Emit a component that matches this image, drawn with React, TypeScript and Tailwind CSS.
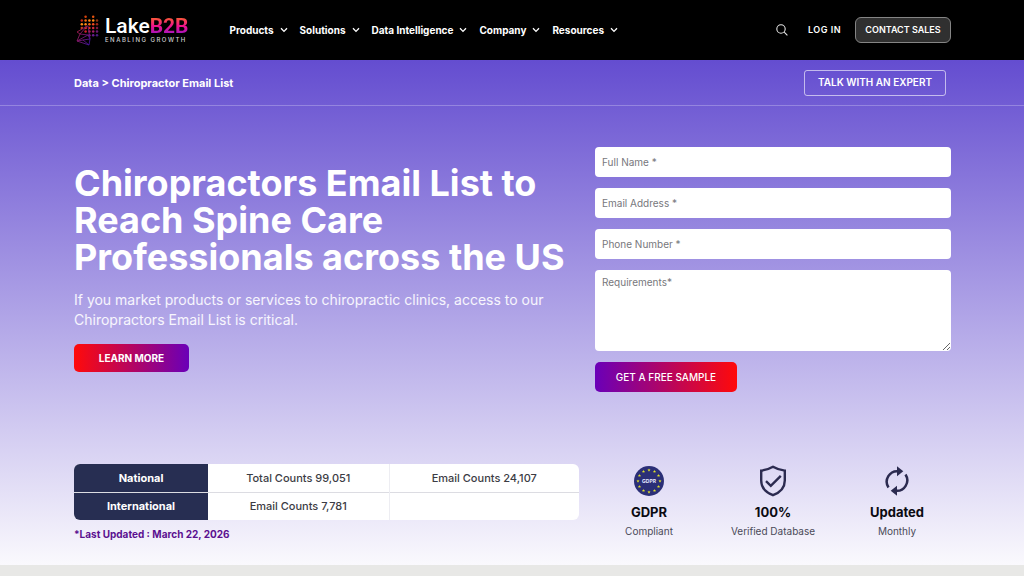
import type { ReactNode } from "react";

const navItems = ["Products", "Solutions", "Data Intelligence", "Company", "Resources"];

function Chevron() {
  return (
    <svg viewBox="0 0 8 6" className="h-[6px] w-2" fill="none" stroke="#fff" strokeWidth="1.3" aria-hidden="true">
      <path d="M1 1.2 4 4.4 7 1.2" />
    </svg>
  );
}

const dotColours = [
  ["", "", "#d8430c", "", "#e8540f", ""],
  ["", "#c9280f", "#f06a10", "#ff8a14", "#ff8a14", "#8a3510"],
  ["", "#ff8a14", "#ff8a14", "#f36a16", "#ef4a1c", "#a02818"],
  ["", "#c9401a", "#f0401e", "#e2301e", "#d22a3a", "#7a1a40"],
  ["", "", "#d0202a", "#b81c4a", "#a01c6a", "#6a1a70"],
  ["", "", "", "#8a1a70", "#6a1c90", "#4a1a80"],
];

function Logo() {
  return (
    <a href="#home" aria-label="Lake B2B" className="flex items-center gap-[6px]">
      <svg viewBox="0 0 23 31" className="h-[31px] w-[23px]" aria-hidden="true">
        <defs>
          <linearGradient id="wing" x1="0" y1="0" x2="1" y2="1">
            <stop offset="0" stopColor="#b01a3c" />
            <stop offset="1" stopColor="#3d12a0" />
          </linearGradient>
        </defs>
        {dotColours.map((row, r) =>
          row.map((c, i) => c && <circle key={`${r}-${i}`} cx={2 + i * 3.8} cy={1.8 + r * 3.7} r="1.25" fill={c} />)
        )}
        <g fill="none" stroke="url(#wing)" strokeWidth="0.9">
          <path d="M11 11 1 17l3 2-3 7 6-1 6 5 1-6-2-13Z" />
          <path d="M11 11 4 19l8 1-11 6 12 4M12 20l2 4-7 1" />
        </g>
      </svg>
      <span className="flex flex-col">
        <span className="font-[Roboto,sans-serif] text-[21px] leading-5 font-medium text-white">
          Lake
          <span className="bg-linear-to-b/srgb from-[#ff7a10] via-[#f0128c] to-[#7a16d8] bg-clip-text font-bold text-transparent">
            B2B
          </span>
        </span>
        <span className="text-[6px] leading-2 font-medium tracking-[1.5px] text-[#d0d0d0]">ENABLING GROWTH</span>
      </span>
    </a>
  );
}

function Header() {
  return (
    <header className="flex h-15 items-center bg-black pr-[73px] pl-[76px] text-white">
      <Logo />
      <nav className="ml-[41px] flex items-center gap-3">
        {navItems.map((item) => (
          <button key={item} type="button" className="flex items-center gap-[6px] text-[10px] leading-4 font-bold whitespace-nowrap">
            {item}
            <Chevron />
          </button>
        ))}
      </nav>
      <div className="ml-auto flex items-center">
        <button type="button" aria-label="Search" className="mr-5">
          <svg viewBox="0 0 12 12" className="h-3 w-3" fill="none" stroke="#e5e5e5" strokeWidth="1.1" aria-hidden="true">
            <circle cx="5" cy="5" r="4.2" />
            <path d="m8.2 8.2 3.2 3.2" />
          </svg>
        </button>
        <a href="#login" className="mr-[14px] text-[9px] leading-4 font-semibold tracking-[0.5px] whitespace-nowrap">
          LOG IN
        </a>
        <a
          href="#contact"
          className="flex h-[26px] w-24 items-center justify-center rounded-md border border-[#858585] bg-[#303030] text-[9px] font-semibold whitespace-nowrap"
        >
          CONTACT SALES
        </a>
      </div>
    </header>
  );
}

function LeadForm() {
  const field =
    "block w-full rounded-sm bg-white px-[7px] text-[10px] text-gray-800 placeholder:text-[#77777c] outline-none";
  return (
    <form className="flex flex-col items-start gap-[11px]" onSubmit={(e) => e.preventDefault()}>
      <input aria-label="Full Name" placeholder="Full Name *" className={`${field} h-[30px]`} />
      <input aria-label="Email Address" type="email" placeholder="Email Address *" className={`${field} h-[30px]`} />
      <input aria-label="Phone Number" type="tel" placeholder="Phone Number *" className={`${field} h-[30px]`} />
      <textarea aria-label="Requirements" placeholder="Requirements*" className={`${field} h-[81px] resize py-[5px] leading-[15px]`} />
      <button
        type="submit"
        className="h-[30px] w-[142px] rounded-[5px] bg-linear-to-r/srgb from-[#6a00b8] to-[#ff0a0a] text-[10px] font-medium whitespace-nowrap text-white"
      >
        GET A FREE SAMPLE
      </button>
    </form>
  );
}

function CountsTable() {
  const head = "w-[134px] bg-[#272e52] text-center font-bold text-white";
  const cell = "text-center font-medium text-[#3c3c44]";
  return (
    <div>
      <div className="overflow-hidden rounded-md bg-white">
        <table className="w-full table-fixed border-collapse text-[11px] leading-4">
          <tbody>
            <tr className="h-7 border-b border-[#dcdce2]">
              <th scope="row" className={head}>National</th>
              <td className={`${cell} w-[181px] border-r border-[#ededf2]`}>Total Counts 99,051</td>
              <td className={cell}>Email Counts 24,107</td>
            </tr>
            <tr className="h-7">
              <th scope="row" className={head}>International</th>
              <td className={`${cell} border-r border-[#ededf2]`}>Email Counts 7,781</td>
              <td className={cell} />
            </tr>
          </tbody>
        </table>
      </div>
      <p className="mt-[6px] text-[10px] leading-4 font-bold text-[#5b1090]">*Last Updated : March 22, 2026</p>
    </div>
  );
}

const stars = Array.from({ length: 12 }, (_, i) => (i * Math.PI) / 6);

function GdprIcon() {
  return (
    <svg viewBox="0 0 30 30" className="h-[30px] w-[30px]" aria-hidden="true">
      <circle cx="15" cy="15" r="15" fill="#2b2f77" />
      {stars.map((a) => (
        <path
          key={a}
          transform={`translate(${15 + 11 * Math.sin(a)} ${15 - 11 * Math.cos(a)})`}
          d="M0-1.6.45-.5 1.6-.45.7.25 1 1.4 0 .75-1 1.4-.7.25-1.6-.45-.45-.5Z"
          fill="#dfe02a"
        />
      ))}
      <text x="15" y="16.8" textAnchor="middle" fontSize="5" fontWeight="700" fill="#e6e8ff">
        GDPR
      </text>
    </svg>
  );
}

function ShieldIcon() {
  return (
    <svg viewBox="0 0 28 32" className="h-8 w-7" fill="none" stroke="#2c2b50" strokeWidth="2.4" aria-hidden="true">
      <path d="M14 1.8C10.5 3.9 6.5 5.2 2.2 5.6V15.5C2.2 22.5 7 27.5 14 30.2 21 27.5 25.8 22.5 25.8 15.5V5.6C21.5 5.2 17.5 3.9 14 1.8Z" />
      <path d="m7 16.2 4.8 4.6L21.800 10.8" />
    </svg>
  );
}

function RefreshIcon() {
  return (
    <svg viewBox="0 0 24 30" className="h-[30px] w-6" aria-hidden="true">
      <g fill="none" stroke="#2c2b50" strokeWidth="2.5">
        <path d="M3.5 21.500A10.500 10.500 0 0 1 13.500 5.300" />
        <path d="M20.500 8.500A10.500 10.500 0 0 1 10.500 24.700" />
      </g>
      <path d="M12 .3 18.3 5.3 12 10.3ZM12 19.7 5.7 24.7 12 29.7Z" fill="#2c2b50" />
    </svg>
  );
}

function Feature({ icon, title, text }: { icon: ReactNode; title: string; text: string }) {
  return (
    <div className="flex flex-col items-center pt-px">
      <div className="flex h-8 items-center">{icon}</div>
      <p className="mt-[7px] text-[13px] leading-4 font-bold text-[#0b0b12]">{title}</p>
      <p className="mt-[3px] text-[10px] leading-4 whitespace-nowrap text-[#4a4a58]">{text}</p>
    </div>
  );
}

export default function App() {
  return (
    <div className="min-h-screen bg-[#e8e8e6] font-[Inter,sans-serif]">
      <Header />
      <main className="bg-linear-to-b/srgb from-[#644dd0] to-[#faf9fd] pb-[23px]">
        <div className="flex h-[46px] items-center justify-between border-b border-white/25 pr-[78px] pl-[74px] text-white">
          <p className="text-[11px] leading-4 font-bold">
            <a href="#data">Data</a> &gt; Chiropractor Email List
          </p>
          <a
            href="#expert"
            className="flex h-[26px] w-[142px] items-center justify-center rounded-[3px] border border-white/60 text-[10px] font-semibold whitespace-nowrap"
          >
            TALK WITH AN EXPERT
          </a>
        </div>
        <section className="grid grid-cols-[505fr_356fr] gap-x-4 pt-[41px] pr-[73px] pl-[74px]">
          <div className="pt-[18px] text-white">
            <h1 className="text-[36px] leading-[37px] font-bold whitespace-nowrap">
              Chiropractors Email List to
              <br />
              Reach Spine Care
              <br />
              Professionals across the US
            </h1>
            <p className="mt-[14px] text-[14px] leading-5 whitespace-nowrap text-white/90">
              If you market products or services to chiropractic clinics, access to our
              <br />
              Chiropractors Email List is critical.
            </p>
            <a
              href="#learn"
              className="mt-[14px] flex h-7 w-[115px] items-center justify-center rounded-[5px] bg-linear-to-r/srgb from-[#ff0a0a] to-[#6a00b8] text-[10px] font-bold"
            >
              LEARN MORE
            </a>
          </div>
          <LeadForm />
        </section>
        <section className="grid grid-cols-[505fr_380fr] pt-[72px] pr-[65px] pl-[74px]">
          <CountsTable />
          <div className="grid grid-cols-3 pl-2">
            <Feature icon={<GdprIcon />} title="GDPR" text="Compliant" />
            <Feature icon={<ShieldIcon />} title="100%" text="Verified Database" />
            <Feature icon={<RefreshIcon />} title="Updated" text="Monthly" />
          </div>
        </section>
      </main>
    </div>
  );
}
